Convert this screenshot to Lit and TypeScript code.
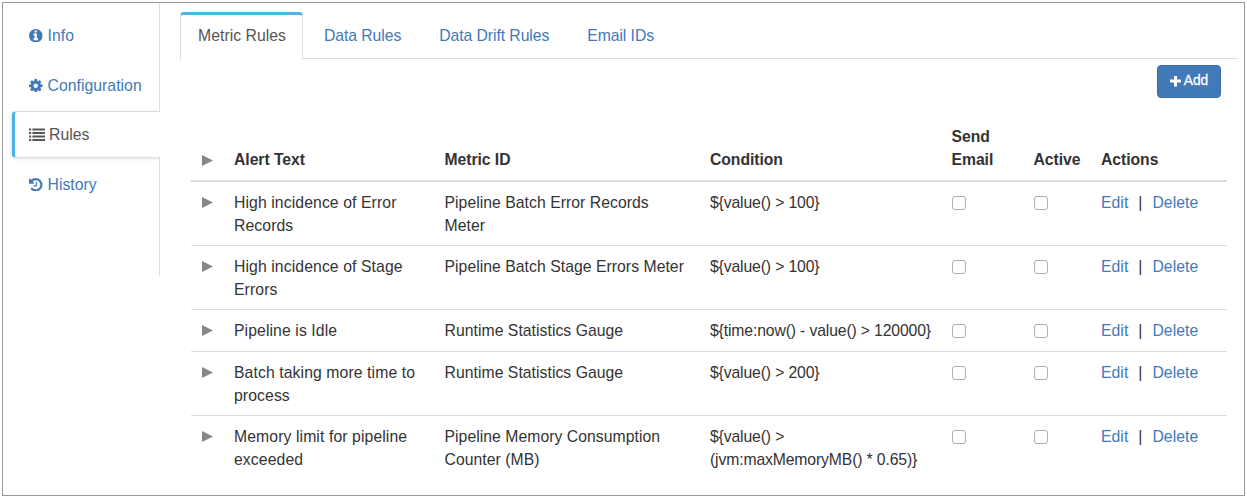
import { LitElement, html, css, svg } from "lit";
import { customElement, state } from "lit/decorators.js";
import { classMap } from "lit/directives/class-map.js";

const icons = {
  info: svg`<svg class="icon" viewBox="128 128 1536 1536"><path d="M1152 1376v-160q0-14-9-23t-23-9h-96v-512q0-14-9-23t-23-9h-320q-14 0-23 9t-9 23v160q0 14 9 23t23 9h96v320h-96q-14 0-23 9t-9 23v160q0 14 9 23t23 9h448q14 0 23-9t9-23zm-128-896v-160q0-14-9-23t-23-9h-192q-14 0-23 9t-9 23v160q0 14 9 23t23 9h192q14 0 23-9t9-23zm640 416q0 209-103 385.5t-279.5 279.5-385.5 103-385.5-103-279.5-279.5-103-385.5 103-385.5 279.5-279.5 385.5-103 385.5 103 279.5 279.5 103 385.5z"/></svg>`,
  cog: svg`<svg class="icon" viewBox="128 128 1536 1536"><path d="M1152 896q0-106-75-181t-181-75-181 75-75 181 75 181 181 75 181-75 75-181zm512-109v222q0 12-8 23t-20 13l-185 28q-19 54-39 91 35 50 107 138 10 12 10 25t-9 23q-27 37-99 108t-94 71q-12 0-26-9l-138-108q-44 23-91 38-16 136-29 186-7 28-36 28h-222q-14 0-24.5-8.5t-11.5-21.5l-28-184q-49-16-90-37l-141 107q-10 9-25 9-14 0-25-11-126-114-165-168-7-10-7-23 0-12 8-23 15-21 51-66.5t54-70.5q-27-50-41-99l-183-27q-13-2-21-12.5t-8-23.5v-222q0-12 8-23t19-13l186-28q14-46 39-92-40-57-107-138-10-12-10-24 0-10 9-23 26-36 98.5-107.5t94.5-71.5q13 0 26 10l138 107q44-23 91-38 16-136 29-186 7-28 36-28h222q14 0 24.5 8.5t11.5 21.5l28 184q49 16 90 37l142-107q9-9 24-9 13 0 25 10 129 119 165 170 7 8 7 22 0 12-8 23-15 21-51 66.5t-54 70.5q26 50 41 98l183 28q13 2 21 12.5t8 23.5z"/></svg>`,
  list: svg`<svg class="icon wide" viewBox="0 0 16 13.5"><path d="M0 .4h2.2v2.2H0zM0 3.9h2.2v2.2H0zM0 7.4h2.2v2.2H0zM0 10.9h2.2v2.2H0zM3.4 .4H16v2.2H3.4zM3.4 3.9H16v2.2H3.4zM3.4 7.4H16v2.2H3.4zM3.4 10.9H16v2.2H3.4z"/></svg>`,
  history: svg`<svg class="icon" viewBox="128 128 1536 1536"><path d="M1664 896q0 156-61 298t-164 245-245 164-298 61q-172 0-327-72.5t-264-204.5q-7-10-6.5-22.5t8.5-20.5l137-138q10-9 25-9 16 2 23 12 73 95 179 147t225 52q104 0 198.5-40.5t163.5-109.5 109.5-163.5 40.5-198.5-40.5-198.5-109.5-163.5-163.5-109.5-198.5-40.5q-98 0-188 35.5t-160 101.5l137 138q31 30 14 69-17 40-59 40h-448q-26 0-45-19t-19-45v-448q0-42 40-59 39-17 69 14l130 129q107-101 244.5-156.5t284.5-55.5q156 0 298 61t245 164 164 245 61 298zm-640-288v448q0 14-9 23t-23 9h-320q-14 0-23-9t-9-23v-64q0-14 9-23t23-9h224v-352q0-14 9-23t23-9h64q14 0 23 9t9 23z"/></svg>`,
  plus: svg`<svg class="plus" viewBox="192 192 1408 1408"><path d="M1600 736v192q0 40-28 68t-68 28h-416v416q0 40-28 68t-68 28h-192q-40 0-68-28t-28-68v-416h-416q-40 0-68-28t-28-68v-192q0-40 28-68t68-28h416v-416q0-40 28-68t68-28h192q40 0 68 28t28 68v416h416q40 0 68 28t28 68z"/></svg>`,
};

const nav = [
  { icon: icons.info, label: "Info" },
  { icon: icons.cog, label: "Configuration" },
  { icon: icons.list, label: "Rules" },
  { icon: icons.history, label: "History" },
];

const tabs = ["Metric Rules", "Data Rules", "Data Drift Rules", "Email IDs"];

const rules = [
  { alert: ["High incidence of Error", "Records"], metric: ["Pipeline Batch Error Records", "Meter"], condition: ["${value() > 100}"] },
  { alert: ["High incidence of Stage", "Errors"], metric: ["Pipeline Batch Stage Errors Meter"], condition: ["${value() > 100}"] },
  { alert: ["Pipeline is Idle"], metric: ["Runtime Statistics Gauge"], condition: ["${time:now() - value() > 120000}"] },
  { alert: ["Batch taking more time to", "process"], metric: ["Runtime Statistics Gauge"], condition: ["${value() > 200}"] },
  { alert: ["Memory limit for pipeline", "exceeded"], metric: ["Pipeline Memory Consumption", "Counter (MB)"], condition: ["${value() >", "(jvm:maxMemoryMB() * 0.65)}"] },
];

const arrow = html`<svg class="arrow" viewBox="0 0 11 11"><path d="M0 0L11 5.5L0 11z" /></svg>`;
const lines = (parts: string[]) => parts.map((p) => html`<div class="line">${p}</div>`);

@customElement("app-root")
export class AppRoot extends LitElement {
  @state() private section = "Rules";
  @state() private tab = "Metric Rules";

  static styles = css`
    :host {
      display: block;
      box-sizing: border-box;
      height: 498px;
      padding: 2px 2px 2px;
      background: #fff;
      color: #333;
      font: 15.75px/22.5px "Liberation Sans", Arial, sans-serif;
      letter-spacing: 0.04px;
      overflow: hidden;
    }
    * { box-sizing: border-box; }
    .frame {
      display: flex;
      height: 494px;
      border: 1px solid #999;
    }
    a { color: #4479b8; text-decoration: none; cursor: pointer; }
    .side {
      display: flex;
      flex-direction: column;
      width: 157px;
      height: 273px;
      padding-left: 9px;
    }
    .item {
      display: flex;
      align-items: center;
      gap: 5px;
      height: 50px;
      flex: none;
      padding: 0 0 1px 17px;
      border-right: 1px solid #ddd;
    }
    .item:first-child { height: 58px; padding-bottom: 0; padding-top: 7px; }
    .item.active {
      height: 47px;
      padding: 0 0 0 14px;
      color: #555;
      border: 1px solid #ddd;
      border-left: 3px solid #4bb4e6;
      border-right: 0;
      border-radius: 4px 0 0 4px;
      box-shadow: -1px 1px 3px rgba(0, 0, 0, 0.12);
      clip-path: inset(-4px 0 -4px -4px);
    }
    .label { padding-top: 2px; }
    .item.active .label { margin-left: -1px; }
    .item:last-of-type { height: 53px; padding-bottom: 0; }
    .rest { flex: 1; border-right: 1px solid #ddd; }
    .icon { width: 13.5px; height: 13.5px; fill: currentColor; flex: none; }
    .icon.wide { width: 16px; }
    .main { flex: 1; padding: 9px 6px 0 20px; min-width: 0; }
    .tabs {
      display: flex;
      gap: 2px;
      height: 47px;
      border-bottom: 1px solid #ddd;
    }
    .tab {
      height: 46px;
      padding: 13px 16px 0 18px;
      border: solid transparent;
      border-width: 0 1px;
      white-space: nowrap;
      letter-spacing: -0.07px;
    }
    .tab.active {
      width: 123px;
      height: 47px;
      padding: 10px 0 0 17px;
      letter-spacing: 0.04px;
      color: #555;
      background: #fff;
      border: 1px solid #ddd;
      border-top: 3px solid #4bb4e6;
      border-bottom: 0;
      border-radius: 4px 4px 0 0;
    }
    .toolbar { display: flex; justify-content: flex-end; padding: 6px 17px 0 0; }
    .add {
      display: flex;
      align-items: center;
      justify-content: center;
      gap: 3px;
      width: 64px;
      height: 33px;
      padding: 0 0 1px;
      color: #fff;
      background: #4279b9;
      border: 1px solid #3a6ca6;
      border-radius: 4px;
      font: 13.75px/20px "Liberation Sans", Arial, sans-serif;
      -webkit-text-stroke: 0.3px #fff;
    }
    .plus { width: 11px; height: 11px; fill: #fff; }
    .table { width: 1036px; margin: 19px 0 0 11px; }
    .row {
      display: grid;
      grid-template-columns: 34px 210.5px 265.5px 241.5px 82px 67.5px 1fr;
      height: 64px;
      padding-top: 9px;
      border-top: 1px solid #ddd;
    }
    .row.single { height: 42px; }
    .row.head {
      height: 65px;
      align-items: end;
      padding: 0 0 9px;
      border-top: 0;
      border-bottom: 2px solid #ddd;
      font-weight: bold;
      letter-spacing: -0.06px;
    }
    .row.head + .row { height: 63px; padding-top: 10px; border-top: 0; }
    .cell { padding-left: 9px; white-space: nowrap; }
    .cell.alert { letter-spacing: 0.1px; }
    .cell.condition { letter-spacing: -0.14px; }
    .row:not(.head) { padding-top: 10px; }
    .arrow { display: block; width: 11px; height: 11px; margin: 5px 0 0 2px; fill: #888; }
    .head .arrow { margin-bottom: 5px; }
    .check {
      appearance: none;
      display: block;
      width: 14px;
      height: 14px;
      margin: 4px 0 0;
      background: #fff;
      border: 1px solid #b0b0b0;
      border-radius: 3px;
    }
    .sep { margin: 0 10px; }
  `;

  render() {
    return html`
      <div class="frame">
        <nav class="side">
          ${nav.map(
            (n) => html`<a class=${classMap({ item: true, active: n.label === this.section })} @click=${() => (this.section = n.label)}>
              ${n.icon}<span class="label">${n.label}</span>
            </a>`
          )}
          <div class="rest"></div>
        </nav>
        <main class="main">
          <div class="tabs">
            ${tabs.map(
              (t) => html`<a class=${classMap({ tab: true, active: t === this.tab })} @click=${() => (this.tab = t)}>${t}</a>`
            )}
          </div>
          <div class="toolbar"><button class="add">${icons.plus}<span>Add</span></button></div>
          <div class="table">
            <div class="row head">
              <div class="cell">${arrow}</div>
              <div class="cell">Alert Text</div>
              <div class="cell">Metric ID</div>
              <div class="cell">Condition</div>
              <div class="cell">${lines(["Send", "Email"])}</div>
              <div class="cell">Active</div>
              <div class="cell">Actions</div>
            </div>
            ${rules.map(
              (r) => html`<div class=${classMap({ row: true, single: r.alert.length === 1 })}>
                <div class="cell">${arrow}</div>
                <div class="cell alert">${lines(r.alert)}</div>
                <div class="cell">${lines(r.metric)}</div>
                <div class="cell condition">${lines(r.condition)}</div>
                <div class="cell"><input class="check" type="checkbox" /></div>
                <div class="cell"><input class="check" type="checkbox" /></div>
                <div class="cell"><a>Edit</a><span class="sep">|</span><a>Delete</a></div>
              </div>`
            )}
          </div>
        </main>
      </div>
    `;
  }
}
